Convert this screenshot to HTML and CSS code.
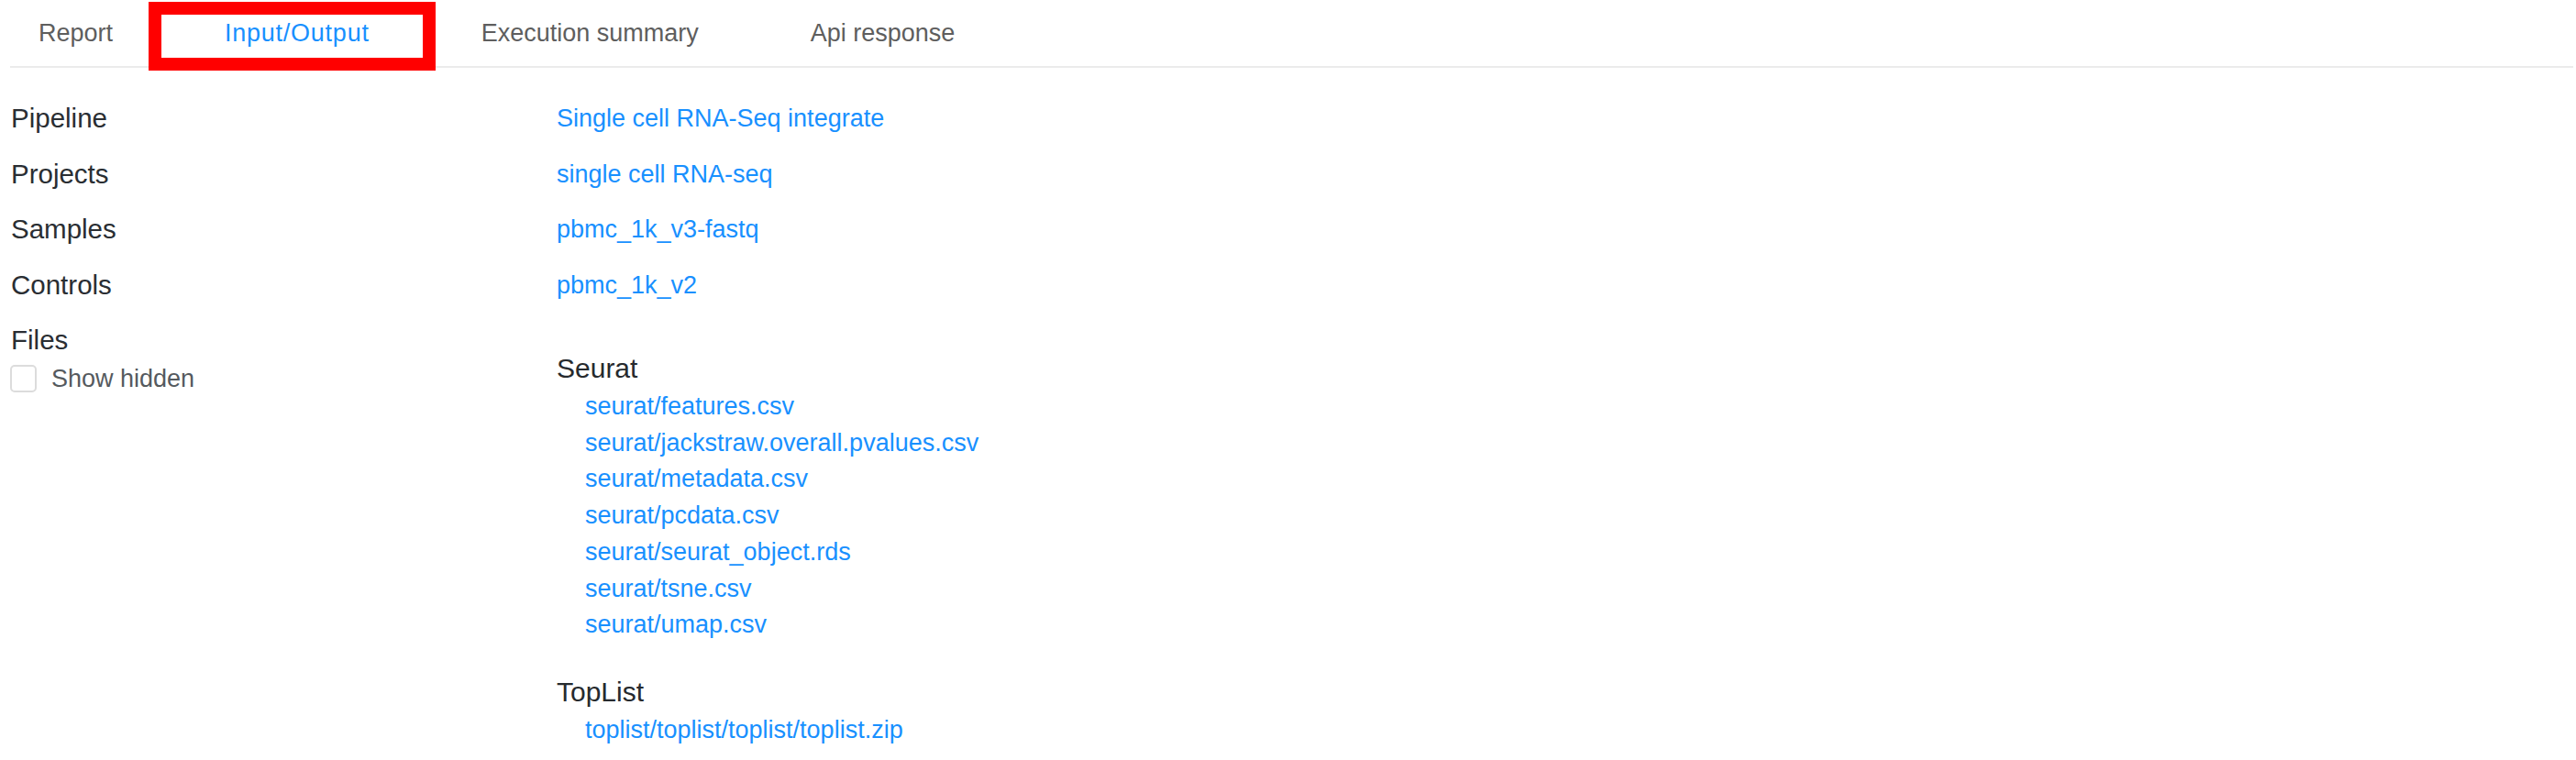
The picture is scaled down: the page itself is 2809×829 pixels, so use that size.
FILE: index.html
```html
<!DOCTYPE html>
<html lang="en">
<head>
<meta charset="utf-8">
<title>Input/Output</title>
<link rel="stylesheet" href="styles.css">
</head>
<body>
<div class="page">
  <nav class="tabs">
    <div class="tab">Report</div>
    <div class="tab tab-active">Input/Output</div>
    <div class="tab">Execution summary</div>
    <div class="tab">Api response</div>
  </nav>
  <div class="highlight"></div>

  <div class="details">
    <div class="label">Pipeline</div>
    <div class="value"><a class="link" href="#">Single cell RNA-Seq integrate</a></div>

    <div class="label">Projects</div>
    <div class="value"><a class="link" href="#">single cell RNA-seq</a></div>

    <div class="label">Samples</div>
    <div class="value"><a class="link" href="#">pbmc_1k_v3-fastq</a></div>

    <div class="label">Controls</div>
    <div class="value"><a class="link" href="#">pbmc_1k_v2</a></div>

    <div class="label label-files">
      <div>Files</div>
      <label class="check-row">
        <span class="checkbox"></span>
        <span class="check-text">Show hidden</span>
      </label>
    </div>
    <div class="value files">
      <div class="group">
        <div class="group-title">Seurat</div>
        <ul class="file-list">
          <li><a class="link" href="#">seurat/features.csv</a></li>
          <li><a class="link" href="#">seurat/jackstraw.overall.pvalues.csv</a></li>
          <li><a class="link" href="#">seurat/metadata.csv</a></li>
          <li><a class="link" href="#">seurat/pcdata.csv</a></li>
          <li><a class="link" href="#">seurat/seurat_object.rds</a></li>
          <li><a class="link" href="#">seurat/tsne.csv</a></li>
          <li><a class="link" href="#">seurat/umap.csv</a></li>
        </ul>
      </div>
      <div class="group">
        <div class="group-title">TopList</div>
        <ul class="file-list">
          <li><a class="link" href="#">toplist/toplist/toplist/toplist.zip</a></li>
        </ul>
      </div>
    </div>
  </div>
</div>
</body>
</html>
```

FILE: styles.css
```css
html, body {
  margin: 0;
  padding: 0;
  background: #ffffff;
}

body {
  font-family: "Liberation Sans", Arial, sans-serif;
  color: #262a2e;
}

.page {
  position: relative;
  width: 2809px;
  height: 829px;
  overflow: hidden;
}

.tabs {
  display: flex;
  gap: 122px;
  margin: 0 3px 0 11px;
  padding: 16px 0 16px 31px;
  border-bottom: 2px solid #ebebeb;
}

.tab {
  font-size: 27px;
  line-height: 40px;
  color: #5e5e5e;
  white-space: nowrap;
}

.tab-active {
  color: #1890ff;
  letter-spacing: 0.75px;
}

.highlight {
  position: absolute;
  left: 162px;
  top: 2px;
  width: 285px;
  height: 47px;
  border: 14px solid #ff0000;
}

.details {
  display: grid;
  grid-template-columns: 595px 1fr;
  row-gap: 20.5px;
  align-items: start;
  padding: 35px 0 0 12px;
}

.label {
  font-size: 29.5px;
  line-height: 40px;
  color: #2a2e33;
}

.value {
  font-size: 27px;
  line-height: 40px;
}

.link {
  color: #1890ff;
  text-decoration: none;
}

.check-row {
  display: flex;
  align-items: center;
  gap: 16px;
  margin: 2px 0 0 -1px;
  height: 40px;
}

.checkbox {
  box-sizing: border-box;
  width: 29px;
  height: 30px;
  border: 2px solid #dcdcdc;
  border-radius: 5px;
  background: #ffffff;
}

.check-text {
  font-size: 27px;
  line-height: 40px;
  color: #555a5e;
}

.files {
  padding-top: 31px;
}

.group {
  margin-bottom: 33px;
}

.group-title {
  font-size: 30px;
  line-height: 40px;
  color: #262a2e;
  margin-bottom: 2px;
}

.file-list {
  list-style: none;
  margin: 0;
  padding: 0 0 0 31px;
}

.file-list li {
  font-size: 27px;
  line-height: 39.7px;
}
```
